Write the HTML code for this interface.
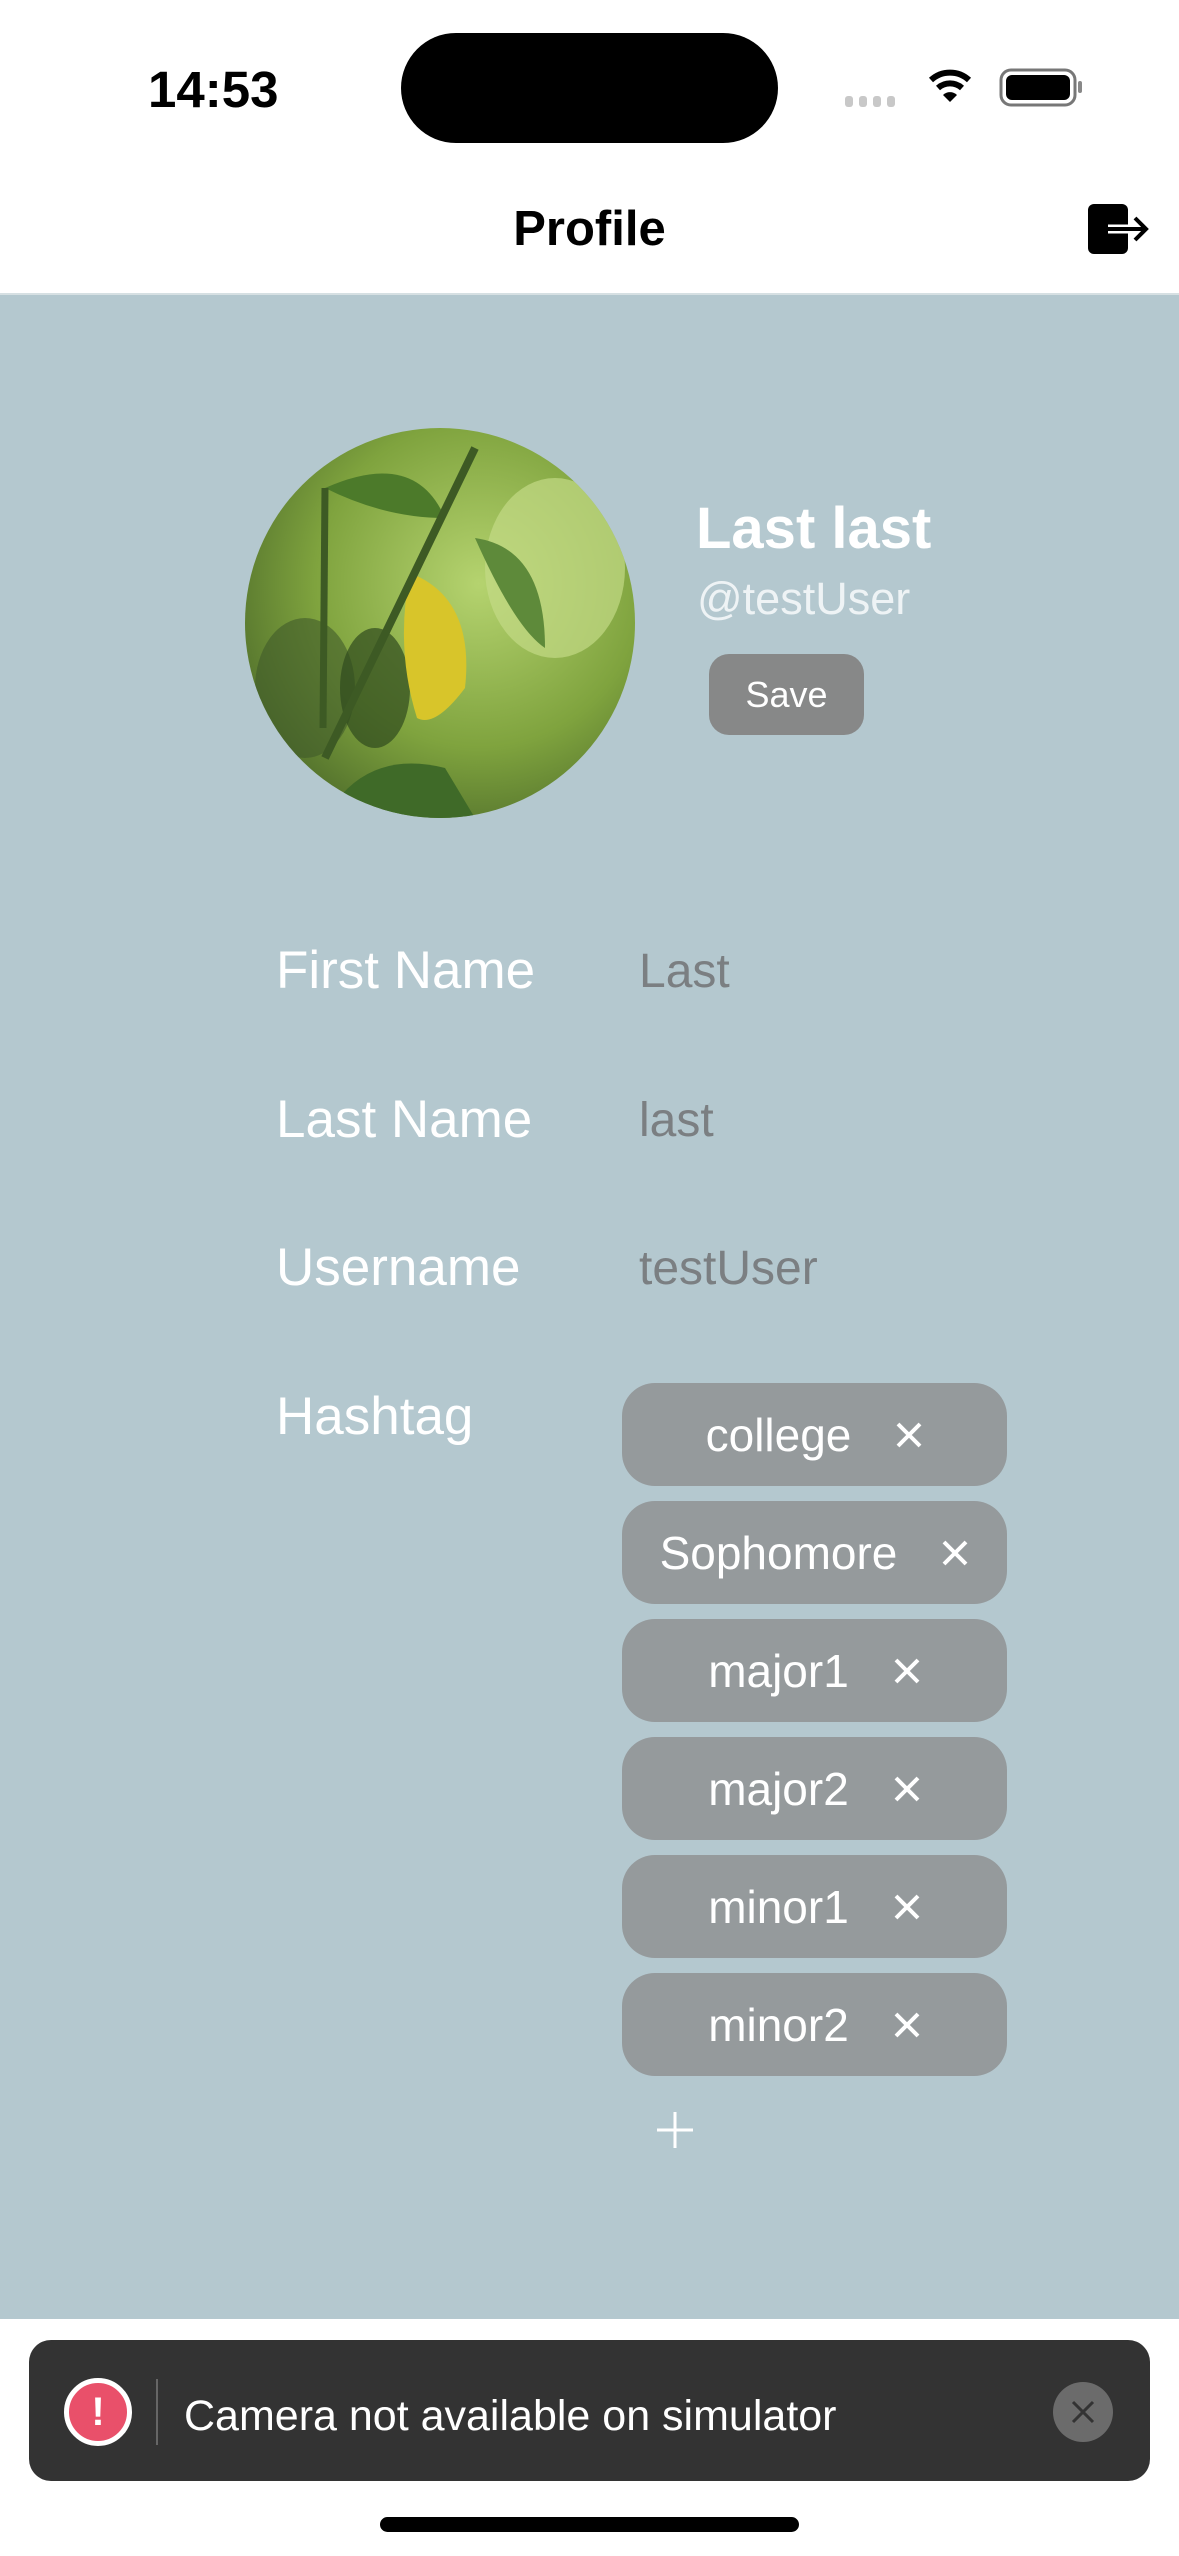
<!DOCTYPE html>
<html><head><meta charset="utf-8"><style>
*{margin:0;padding:0;box-sizing:border-box}
body{width:1179px;height:2556px;background:#fff;position:relative;overflow:hidden;font-family:"Liberation Sans",sans-serif}
.a{position:absolute;line-height:1;white-space:nowrap}
.lbl{color:#fff;font-size:53px;left:276px}
.val{color:#7b7f82;font-size:48px;left:639px}
.chip{position:absolute;left:622px;width:385px;height:103px;border-radius:33px;background:#959a9c;display:flex;align-items:center;justify-content:center;color:#fff;font-size:46px}
.chip svg{margin-left:44px}
</style></head><body>
<div class="a" style="left:148px;top:64px;font-size:51px;font-weight:bold">14:53</div>
<div style="position:absolute;left:401px;top:33px;width:377px;height:110px;border-radius:55px;background:#000"></div>
<svg style="position:absolute;left:840px;top:60px" width="250" height="60" viewBox="0 0 250 60">
<g fill="#c8c8c8"><rect x="5" y="36" width="8" height="11" rx="3"/><rect x="19" y="36" width="8" height="11" rx="3"/><rect x="33" y="36" width="8" height="11" rx="3"/><rect x="47" y="36" width="8" height="11" rx="3"/></g>
<path d="M110 42 L103 35 A10 10 0 0 1 117 35 Z" fill="#000"/>
<path d="M98 28 A18 18 0 0 1 122 28" stroke="#000" stroke-width="6" fill="none"/>
<path d="M91 20 A28 28 0 0 1 129 20" stroke="#000" stroke-width="6" fill="none"/>
<rect x="161" y="10" width="74" height="35" rx="10" fill="none" stroke="#777" stroke-width="3"/>
<rect x="166" y="15" width="64" height="25" rx="6" fill="#000"/>
<rect x="238" y="21" width="4" height="12" rx="2" fill="#888"/>
</svg>
<div class="a" style="left:0;width:1179px;text-align:center;top:205px;font-size:49px;font-weight:bold">Profile</div>
<svg style="position:absolute;left:1086px;top:202px" width="66" height="54" viewBox="0 0 66 54">
<rect x="2" y="2" width="40" height="50" rx="6" fill="#000"/>
<path d="M22 27 H58 M48 15 L60 27 L48 39" stroke="#fff" stroke-width="9" fill="none"/>
<path d="M22 27 H58 M49 16 L60 27 L49 38" stroke="#000" stroke-width="4" fill="none"/>
</svg>
<div style="position:absolute;left:0;top:293px;width:1179px;height:2026px;background:#b4c8cf;border-top:2px solid #d6e0e3"></div>
<svg style="position:absolute;left:245px;top:428px" width="390" height="390" viewBox="0 0 390 390">
<defs><clipPath id="c"><circle cx="195" cy="195" r="195"/></clipPath>
<radialGradient id="g" cx="0.6" cy="0.4" r="0.7"><stop offset="0" stop-color="#b5d36f"/><stop offset="0.6" stop-color="#7fa33e"/><stop offset="1" stop-color="#4d6b2a"/></radialGradient></defs>
<g clip-path="url(#c)">
<rect width="390" height="390" fill="url(#g)"/>
<ellipse cx="310" cy="140" rx="70" ry="90" fill="#c3da86" opacity=".7"/>
<ellipse cx="60" cy="260" rx="50" ry="70" fill="#3f5a2a" opacity=".6"/>
<ellipse cx="130" cy="260" rx="35" ry="60" fill="#2f4a1e" opacity=".7"/>
<path d="M80 60 Q170 20 200 90 Q140 90 80 60Z" fill="#4c7a2a"/>
<path d="M230 110 Q300 120 300 220 Q270 200 230 110Z" fill="#5e8a3a"/>
<path d="M80 390 Q120 320 200 340 L230 390Z" fill="#3f6a28"/>
<path d="M165 145 Q230 170 220 260 Q190 300 172 290 Q150 220 165 145Z" fill="#d8c52a"/>
<path d="M80 330 L230 20" stroke="#3d5a24" stroke-width="8"/>
<path d="M80 60 L78 300" stroke="#3d5a24" stroke-width="7"/>
</g></svg>
<div class="a" style="left:696px;top:500px;font-size:58px;font-weight:bold;color:#fff">Last last</div>
<div class="a" style="left:697px;top:576px;font-size:45px;color:#eef3f5">@testUser</div>
<div style="position:absolute;left:709px;top:654px;width:155px;height:81px;border-radius:20px;background:#878888;color:#fff;font-size:36px;display:flex;align-items:center;justify-content:center">Save</div>
<div class="a lbl" style="top:944px">First Name</div>
<div class="a val" style="top:948px">Last</div>
<div class="a lbl" style="top:1093px">Last Name</div>
<div class="a val" style="top:1097px">last</div>
<div class="a lbl" style="top:1241px">Username</div>
<div class="a val" style="top:1245px">testUser</div>
<div class="a lbl" style="top:1390px">Hashtag</div>
<div class="chip" style="top:1383px">college<svg width="28" height="28"><path d="M3 3L25 25M25 3L3 25" stroke="#fff" stroke-width="4"/></svg></div>
<div class="chip" style="top:1501px">Sophomore<svg width="28" height="28"><path d="M3 3L25 25M25 3L3 25" stroke="#fff" stroke-width="4"/></svg></div>
<div class="chip" style="top:1619px">major1<svg width="28" height="28"><path d="M3 3L25 25M25 3L3 25" stroke="#fff" stroke-width="4"/></svg></div>
<div class="chip" style="top:1737px">major2<svg width="28" height="28"><path d="M3 3L25 25M25 3L3 25" stroke="#fff" stroke-width="4"/></svg></div>
<div class="chip" style="top:1855px">minor1<svg width="28" height="28"><path d="M3 3L25 25M25 3L3 25" stroke="#fff" stroke-width="4"/></svg></div>
<div class="chip" style="top:1973px">minor2<svg width="28" height="28"><path d="M3 3L25 25M25 3L3 25" stroke="#fff" stroke-width="4"/></svg></div>
<svg style="position:absolute;left:655px;top:2110px" width="40" height="40"><path d="M20 2V38M2 20H38" stroke="#fff" stroke-width="3"/></svg>
<div style="position:absolute;left:29px;top:2340px;width:1121px;height:141px;border-radius:22px;background:#333"></div>
<div style="position:absolute;left:64px;top:2378px;width:68px;height:68px;border-radius:50%;background:#e9506a;border:5px solid #fff;color:#fff;font-size:40px;font-weight:bold;display:flex;align-items:center;justify-content:center">!</div>
<div style="position:absolute;left:156px;top:2379px;width:2px;height:66px;background:#666"></div>
<div class="a" style="left:184px;top:2395px;font-size:43px;color:#fff">Camera not available on simulator</div>
<div style="position:absolute;left:1053px;top:2382px;width:60px;height:60px;border-radius:50%;background:#6b6b6b"></div>
<svg style="position:absolute;left:1071px;top:2400px" width="24" height="24"><path d="M2 2L22 22M22 2L2 22" stroke="#333" stroke-width="3"/></svg>
<div style="position:absolute;left:380px;top:2517px;width:419px;height:15px;border-radius:8px;background:#000"></div>
</body></html>
